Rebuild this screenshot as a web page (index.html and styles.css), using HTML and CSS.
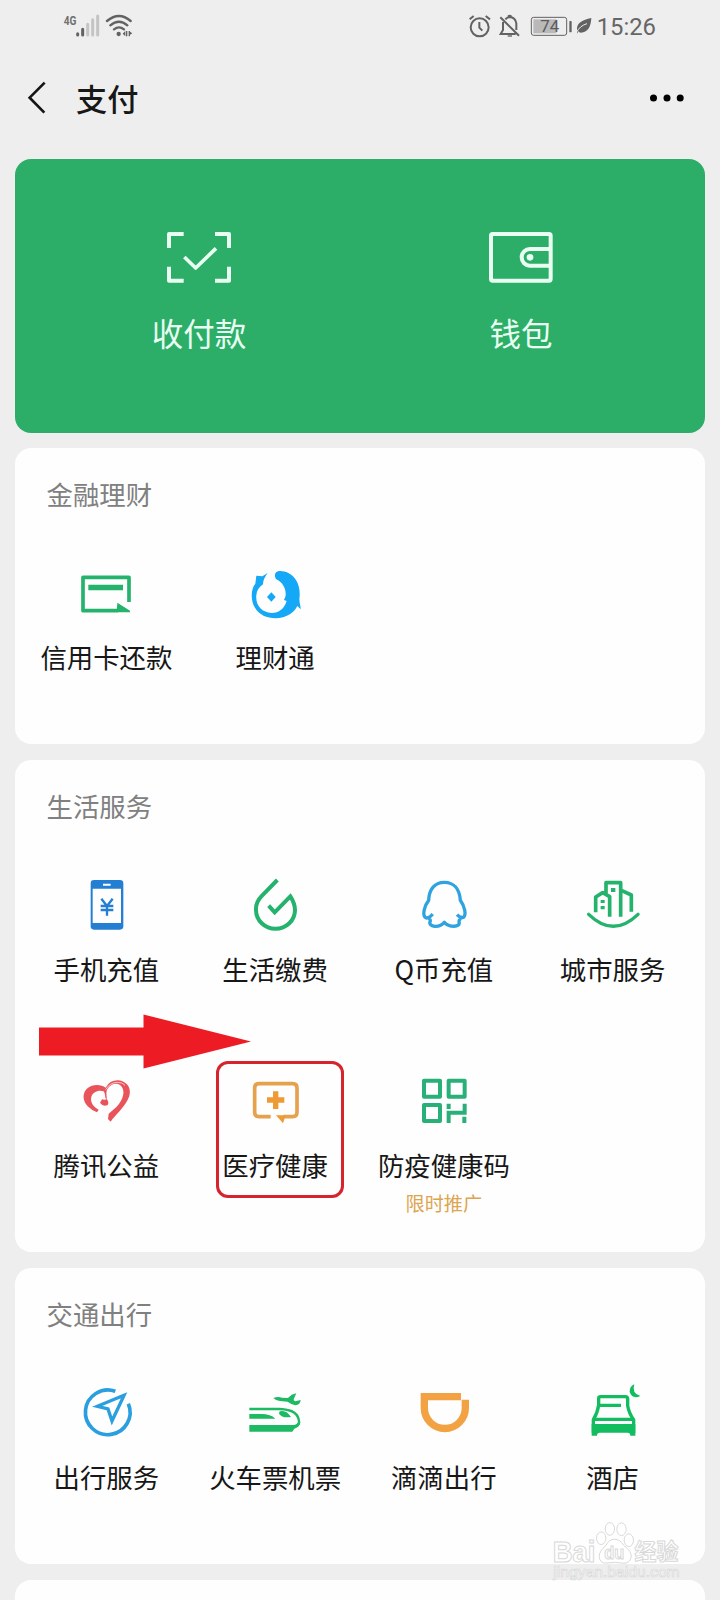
FILE: index.html
```html
<!DOCTYPE html>
<html lang="zh-CN">
<head>
<meta charset="utf-8">
<title>支付</title>
<link rel="stylesheet" href="styles.css">
</head>
<body>
<div class="screen">
  <header class="status">
    <svg class="status-signal" viewBox="183 30 225 90">
      <text class="network" x="191" y="74" textLength="38" lengthAdjust="spacingAndGlyphs">4G</text>
      <g stroke-width="9" stroke-linecap="round" stroke="#626262"><path d="M233 101v4M248 88v17"/><path stroke="#c4c4c4" d="M263 73v32M278 59v46M293 48v57"/></g>
      <g fill="none" stroke="#626262" stroke-width="7" stroke-linecap="round"><path d="M321 63q36-30 71 0M331 76q26-22 51 0M342 88q15-12 30 0"/></g>
      <circle cx="356" cy="102" r="6.500" fill="#626262"/>
      <path fill="#626262" d="M368 101l8-8v16zM378 93h4v16h-4zM386 93h4v16h-4zM390 95l7 5-7 4z"/>
    </svg>
    <div class="status-right">
      <svg class="status-icons" viewBox="315 30 390 90">
        <g fill="none" stroke="#626262" stroke-width="6">
          <circle cx="359" cy="82" r="27"/><path d="M358 66v17l9 9M329 58l12-10M377 48l13 10"/>
          <path d="M421 52l56 55M429 66v24l-7 12h45M436 58q6-7 13-7 17 1 20 19v20M444 50q5-6 10 0"/>
          <path stroke-width="4" d="M443 108h13"/>
          <rect x="514" y="52" width="106" height="54" rx="7" stroke-width="3"/>
        </g>
        <rect x="520" y="58" width="69" height="42" fill="#b9b9b9"/>
        <rect x="628" y="63" width="7" height="34" rx="2" fill="#626262"/>
        <text class="battery" x="541" y="97" textLength="57" lengthAdjust="spacingAndGlyphs">74</text>
        <path fill="#626262" d="M694 54q-2 42-31 44-6 0-8-4l-4 7v-16q1-23 43-31z"/>
        <path fill="none" stroke="#eee" stroke-width="3" d="M650 96q10-19 31-25"/>
      </svg>
      <span class="clock">15:26</span>
    </div>
  </header>

  <nav class="titlebar">
    <svg class="back" viewBox="75 240 72 108"><path d="M134 248L89 293l44 45" fill="none" stroke="#151515" stroke-width="8"/></svg>
    <h1 class="title">支付</h1>
    <svg class="more" viewBox="0 0 36 10"><circle cx="4.500" cy="5" r="3.500"/><circle cx="18" cy="5" r="3.500"/><circle cx="31.200" cy="5" r="3.500"/></svg>
  </nav>

  <main class="cards">
    <section class="hero">
      <div class="hero-item">
        <svg class="hero-icon" viewBox="87 51 240 180"><g fill="none" stroke="#e9fff2" stroke-width="12"><path stroke-linejoin="round" d="M117 114V72h44M255 72h42v42M297 170v42h-42M161 212h-44v-42"/><path stroke-width="11" stroke-linejoin="round" d="M163 141l34 33 61-59"/></g></svg>
        <span class="hero-label">收付款</span>
      </div>
      <div class="hero-item">
        <svg class="hero-icon" viewBox="1053 51 240 180"><g fill="none" stroke="#e9fff2" stroke-width="12"><rect x="1083" y="72" width="179" height="140" rx="5"/><path d="M1262 117h-62a25 25 0 0 0 0 50h62"/></g><circle cx="1200" cy="142" r="10" fill="#e9fff2"/></svg>
        <span class="hero-label">钱包</span>
      </div>
    </section>

    <section class="card">
      <h2 class="card-title">金融理财</h2>
      <div class="grid">
        <div class="item">
          <svg class="icon" viewBox="229 369 180 180"><path d="M388 486v-74H250v100h104" fill="none" stroke="#24b26c" stroke-width="11" stroke-linejoin="round"/><path fill="#24b26c" d="M266 434h104v17H266zM353 488l38 24v5h-40z"/></svg>
          <span class="label">信用卡还款</span>
        </div>
        <div class="item">
          <svg class="icon" viewBox="735 369 180 180"><g fill="#15a8f6"><path d="M803 399L787 409L769 407L766 431C752 447 752 481 764 502C777 525 801 535 826 535C860 534 882 518 892 498L902 508C902 493 896 486 899 468C901 435 887 410 865 399C850 392 833 391 827 398C823 405 825 413 829 418C848 427 856 444 857 460C858 468 854 475 852 480L860 483C853 506 837 519 815 519C785 518 766 496 769 466C770 451 777 441 789 433C789 420 795 411 803 399Z"/><path d="M814 457l13 14-13 14-13-14z"/></g></svg>
          <span class="label">理财通</span>
        </div>
      </div>
    </section>

    <section class="card">
      <h2 class="card-title">生活服务</h2>
      <div class="grid">
        <div class="item">
          <svg class="icon" viewBox="229 345 180 180"><path fill="#247fd3" fill-rule="evenodd" d="M283 360h78q10 0 10 10v129q0 10-10 10h-78q-10 0-10-10V370q0-10 10-10zM279 386v103h85V386zM310 371v6h23v-6z"/><path d="M305 416l17 22 17-22M322 438v29M303 438h38M303 450h38" fill="none" stroke="#247fd3" stroke-width="7"/></svg>
          <span class="label">手机充值</span>
        </div>
        <div class="item">
          <svg class="icon" viewBox="735 345 180 180"><path d="M832 360L784 409C766 428 768 440 768 450A58 56 0 0 0 885 450Q885 431 871 409L824 457L806 437" fill="none" stroke="#24b26c" stroke-width="12"/></svg>
          <span class="label">生活缴费</span>
        </div>
        <div class="item">
          <svg class="icon" viewBox="162 105 180 180"><path d="M218 222Q206 237 197 233C186 226 193 197 206 181C207 149 223 127 253 127C283 127 299 149 301 181C314 199 320 225 310 232Q301 235 291 224M207 234Q213 242 210 245C205 263 240 264 253 247C266 262 303 264 297 245Q297 241 302 234" fill="none" stroke="#2fa3e0" stroke-width="10" stroke-linejoin="round"/></svg>
          <span class="label">Q币充值</span>
        </div>
        <div class="item">
          <svg class="icon" viewBox="668 105 180 180"><g fill="none" stroke="#24b26c" stroke-width="11" stroke-linejoin="round"><path d="M706 217V171l21-13 21 12v60M737 163V128h44v102M783 151l30 14v50" /><path stroke-width="10" stroke-linecap="round" d="M685 223q74 72 148 0"/></g><path fill="#24b26c" d="M721 180h12v9h-12zM721 198h12v10h-12zM752 144h13v12h-13z"/></svg>
          <span class="label">城市服务</span>
        </div>
        <div class="item">
          <svg class="icon" viewBox="229 213 180 180"><g fill="#e9545b"><path d="M318 263C303 251 274 252 260 268C247 284 250 304 264 319Q276 331 292 337L297 329C281 321 271 306 275 291C279 276 296 269 312 274Q316 278 317 295L322 296Q318 277 323 267C333 252 350 247 361 255C380 270 371 299 351 320L327 341L325 357L333 365C344 347 378 321 389 288C396 263 381 244 356 241Q330 240 318 263Z"/><path d="M307 298q9 3 14-1 8 9 3 18-13 7-23-7z"/></g><path d="M318 269q12-21 35-22 16 0 23 9" fill="none" stroke="#fff" stroke-width="2"/></svg>
          <span class="label">腾讯公益</span>
        </div>
        <div class="item">
          <svg class="icon" viewBox="735 213 180 180"><path d="M812 350h-35q-13 0-13-13v-73q0-13 13-13h101q13 0 13 13v73q0 13-13 13h-28" fill="none" stroke="#e5a14e" stroke-width="11"/><path fill="#ee9b36" d="M828 346h29l-8 24zM819 274h16v18h18v16h-18v19h-16v-19h-18v-16h18z"/></svg>
          <span class="label">医疗健康</span>
        </div>
        <div class="item">
          <svg class="icon" viewBox="162 93 180 180"><path d="M192 122h48v48h-48zM266 122h48v48h-48zM192 195h48v48h-48z" fill="none" stroke="#29b078" stroke-width="12" stroke-linejoin="round"/><path d="M266 191v16M266 249v-31h48v-27M313 230v19" fill="none" stroke="#29b078" stroke-width="12"/></svg>
          <span class="label">防疫健康码</span>
          <span class="promo">限时推广</span>
        </div>
      </div>
    </section>

    <section class="card">
      <h2 class="card-title">交通出行</h2>
      <div class="grid">
        <div class="item">
          <svg class="icon" viewBox="229 309 180 180"><g fill="none" stroke="#2a9fdf" stroke-width="11"><path d="M347 334A67 67 0 1 0 386 371"/><path stroke-width="10" d="M373 346L293 379l32 8 12 36z"/></g></svg>
          <span class="label">出行服务</span>
        </div>
        <div class="item">
          <svg class="icon" viewBox="735 309 180 180"><g fill="#1db963"><path d="M748 402h36q28 0 42 14h-78zM748 435h131q15 0 18-15l4 5q0 15-18 21l-6 9H748zM839 394q20-6 34 17-27 4-36-10z"/><path d="M820 354Q833 349 846 353L864 354L875 344L889 340L881 358Q880 363 886 364L902 360Q901 375 886 376Q873 373 863 365L840 363Q827 362 820 354Z"/></g><path d="M748 387h91q58 2 58 40-2 13-19 13" fill="none" stroke="#1db963" stroke-width="7"/></svg>
          <span class="label">火车票机票</span>
        </div>
        <div class="item">
          <svg class="icon" viewBox="162 129 180 180"><path d="M303 170H193v34a61 61 0 0 0 123 0v-25" fill="none" stroke="#f2a143" stroke-width="22"/></svg>
          <span class="label">滴滴出行</span>
        </div>
        <div class="item">
          <svg class="icon" viewBox="668 129 180 180"><g fill="none" stroke="#12bd60" stroke-width="10"><path stroke-linejoin="round" d="M699 278v-39q13-21 16-44V175q0-5 6-5h74q7 0 7 7v20q4 23 18 42v40"/><path d="M717 196h65M698 238h122"/></g><path fill="#12bd60" d="M694 252h131v35h-15q0-9-8-9h-84q-8 0-8 9h-16zM822 133q-9 27 18 35-24 11-32-12-1-16 14-23z"/></svg>
          <span class="label">酒店</span>
        </div>
      </div>
    </section>

    <section class="card card-next"></section>
  </main>

  <svg class="arrow" viewBox="0 0 213 56"><path fill="#ed1c24" d="M0 13.500h104.500V.5L212 27.500 104.500 54.500V41.500H0z"/></svg>
  <div class="highlight"></div>
  <svg class="watermark" viewBox="570 540 400 200">
    <text class="mark-brand" x="578" y="667" textLength="129" lengthAdjust="spacingAndGlyphs">Bai</text>
    <g class="mark-shape"><ellipse cx="724" cy="594" rx="14" ry="19"/><ellipse cx="750" cy="566" rx="14" ry="19"/><ellipse cx="785" cy="567" rx="14" ry="19"/><ellipse cx="807" cy="600" rx="14" ry="19"/><path d="M764 597q17 0 28 19 25 18 22 35-5 20-24 18-26-5-51 0-20 0-21-20 0-16 20-33 9-19 26-19z"/></g>
    <text class="mark-du" x="733" y="657" textLength="60" lengthAdjust="spacingAndGlyphs">du</text>
    <text class="mark-cn" x="824" y="661" textLength="132" lengthAdjust="spacingAndGlyphs">经验</text>
    <text class="mark-url" x="580" y="712" textLength="380" lengthAdjust="spacingAndGlyphs">jingyan.baidu.com</text>
  </svg>
</div>
</body>
</html>
```
FILE: styles.css
```css
* { box-sizing: border-box; }

body {
  margin: 0;
  background: #eee;
  font-family: "Noto Sans CJK SC", sans-serif;
  color: #171717;
}

.screen {
  position: relative;
  width: 720px;
  height: 1600px;
  overflow: hidden;
}

svg { display: block; flex: none; }

.status {
  display: flex;
  justify-content: space-between;
  height: 54px;
  padding: 10px 64px 0 61px;
}
.status-signal { width: 75px; height: 30px; }
.status-right { display: flex; }
.status-icons { width: 130px; height: 30px; }
.network { font: 700 40px Roboto, sans-serif; fill: #707070; }
.battery { font: 400 52px Roboto, sans-serif; fill: #5c5c5c; }
.clock {
  margin-left: 2px;
  font: 23.800px/34px Roboto, sans-serif;
  color: #666;
  white-space: nowrap;
}

.titlebar {
  display: flex;
  align-items: center;
  height: 88px;
  padding: 0 35px 0 25px;
}
.back { width: 24px; height: 36px; }
.title {
  margin: 0 0 0 27px;
  font-size: 31.200px;
  line-height: 40px;
  font-weight: 500;
}
.more { width: 36px; height: 10px; margin-left: auto; }

.cards {
  display: flex;
  flex-direction: column;
  gap: 16px;
  padding: 17px 15px 0;
}

.hero {
  display: flex;
  height: 274px;
  padding: 68px 23px 0;
  border-radius: 16px;
  background: #2cae69;
}
.hero-item {
  display: flex;
  flex: 1;
  flex-direction: column;
  align-items: center;
  gap: 23px;
}
.hero-icon { width: 80px; height: 60px; }
.hero-label { font-size: 31.500px; line-height: 44px; color: #e9fff2; }

.card {
  padding: 28px 8px 32px 7px;
  border-radius: 16px;
  background: #fefefe;
}
.hero + .card { margin-top: -1px; }
.card-title {
  margin: 0 0 51px 24.500px;
  font-size: 26.400px;
  line-height: 36px;
  font-weight: 400;
  color: #808080;
}
.grid {
  display: grid;
  grid-template-columns: repeat(4, 1fr);
  grid-auto-rows: 149px;
  row-gap: 47px;
}
.item {
  display: flex;
  flex-direction: column;
  align-items: center;
}
.icon { width: 60px; height: 60px; margin-bottom: 16px; }
.label { font-size: 26.400px; line-height: 36px; white-space: nowrap; }
.promo { margin-top: 6px; font-size: 19.200px; line-height: 28px; color: #dda550; }
.card-next { height: 60px; }

.arrow {
  position: absolute;
  left: 39px;
  top: 1014px;
  width: 213px;
  height: 56px;
}
.highlight {
  position: absolute;
  left: 216px;
  top: 1061px;
  width: 128px;
  height: 137px;
  border: 3px solid #d6232c;
  border-radius: 12px;
}

.watermark {
  position: absolute;
  left: 550px;
  top: 1520px;
  width: 133px;
  height: 67px;
}
.mark-shape, .mark-brand, .mark-du, .mark-cn, .mark-url {
  fill: #fff;
  stroke: #d8d8d8;
  stroke-width: 3;
}
.mark-brand { font: 700 86px "Liberation Sans", sans-serif; }
.mark-du { font: 700 54px "Liberation Sans", sans-serif; }
.mark-cn { font: 700 68px "Noto Sans CJK SC", sans-serif; }
.mark-url { font: 400 44px "Liberation Sans", sans-serif; stroke-width: 2; }
```
